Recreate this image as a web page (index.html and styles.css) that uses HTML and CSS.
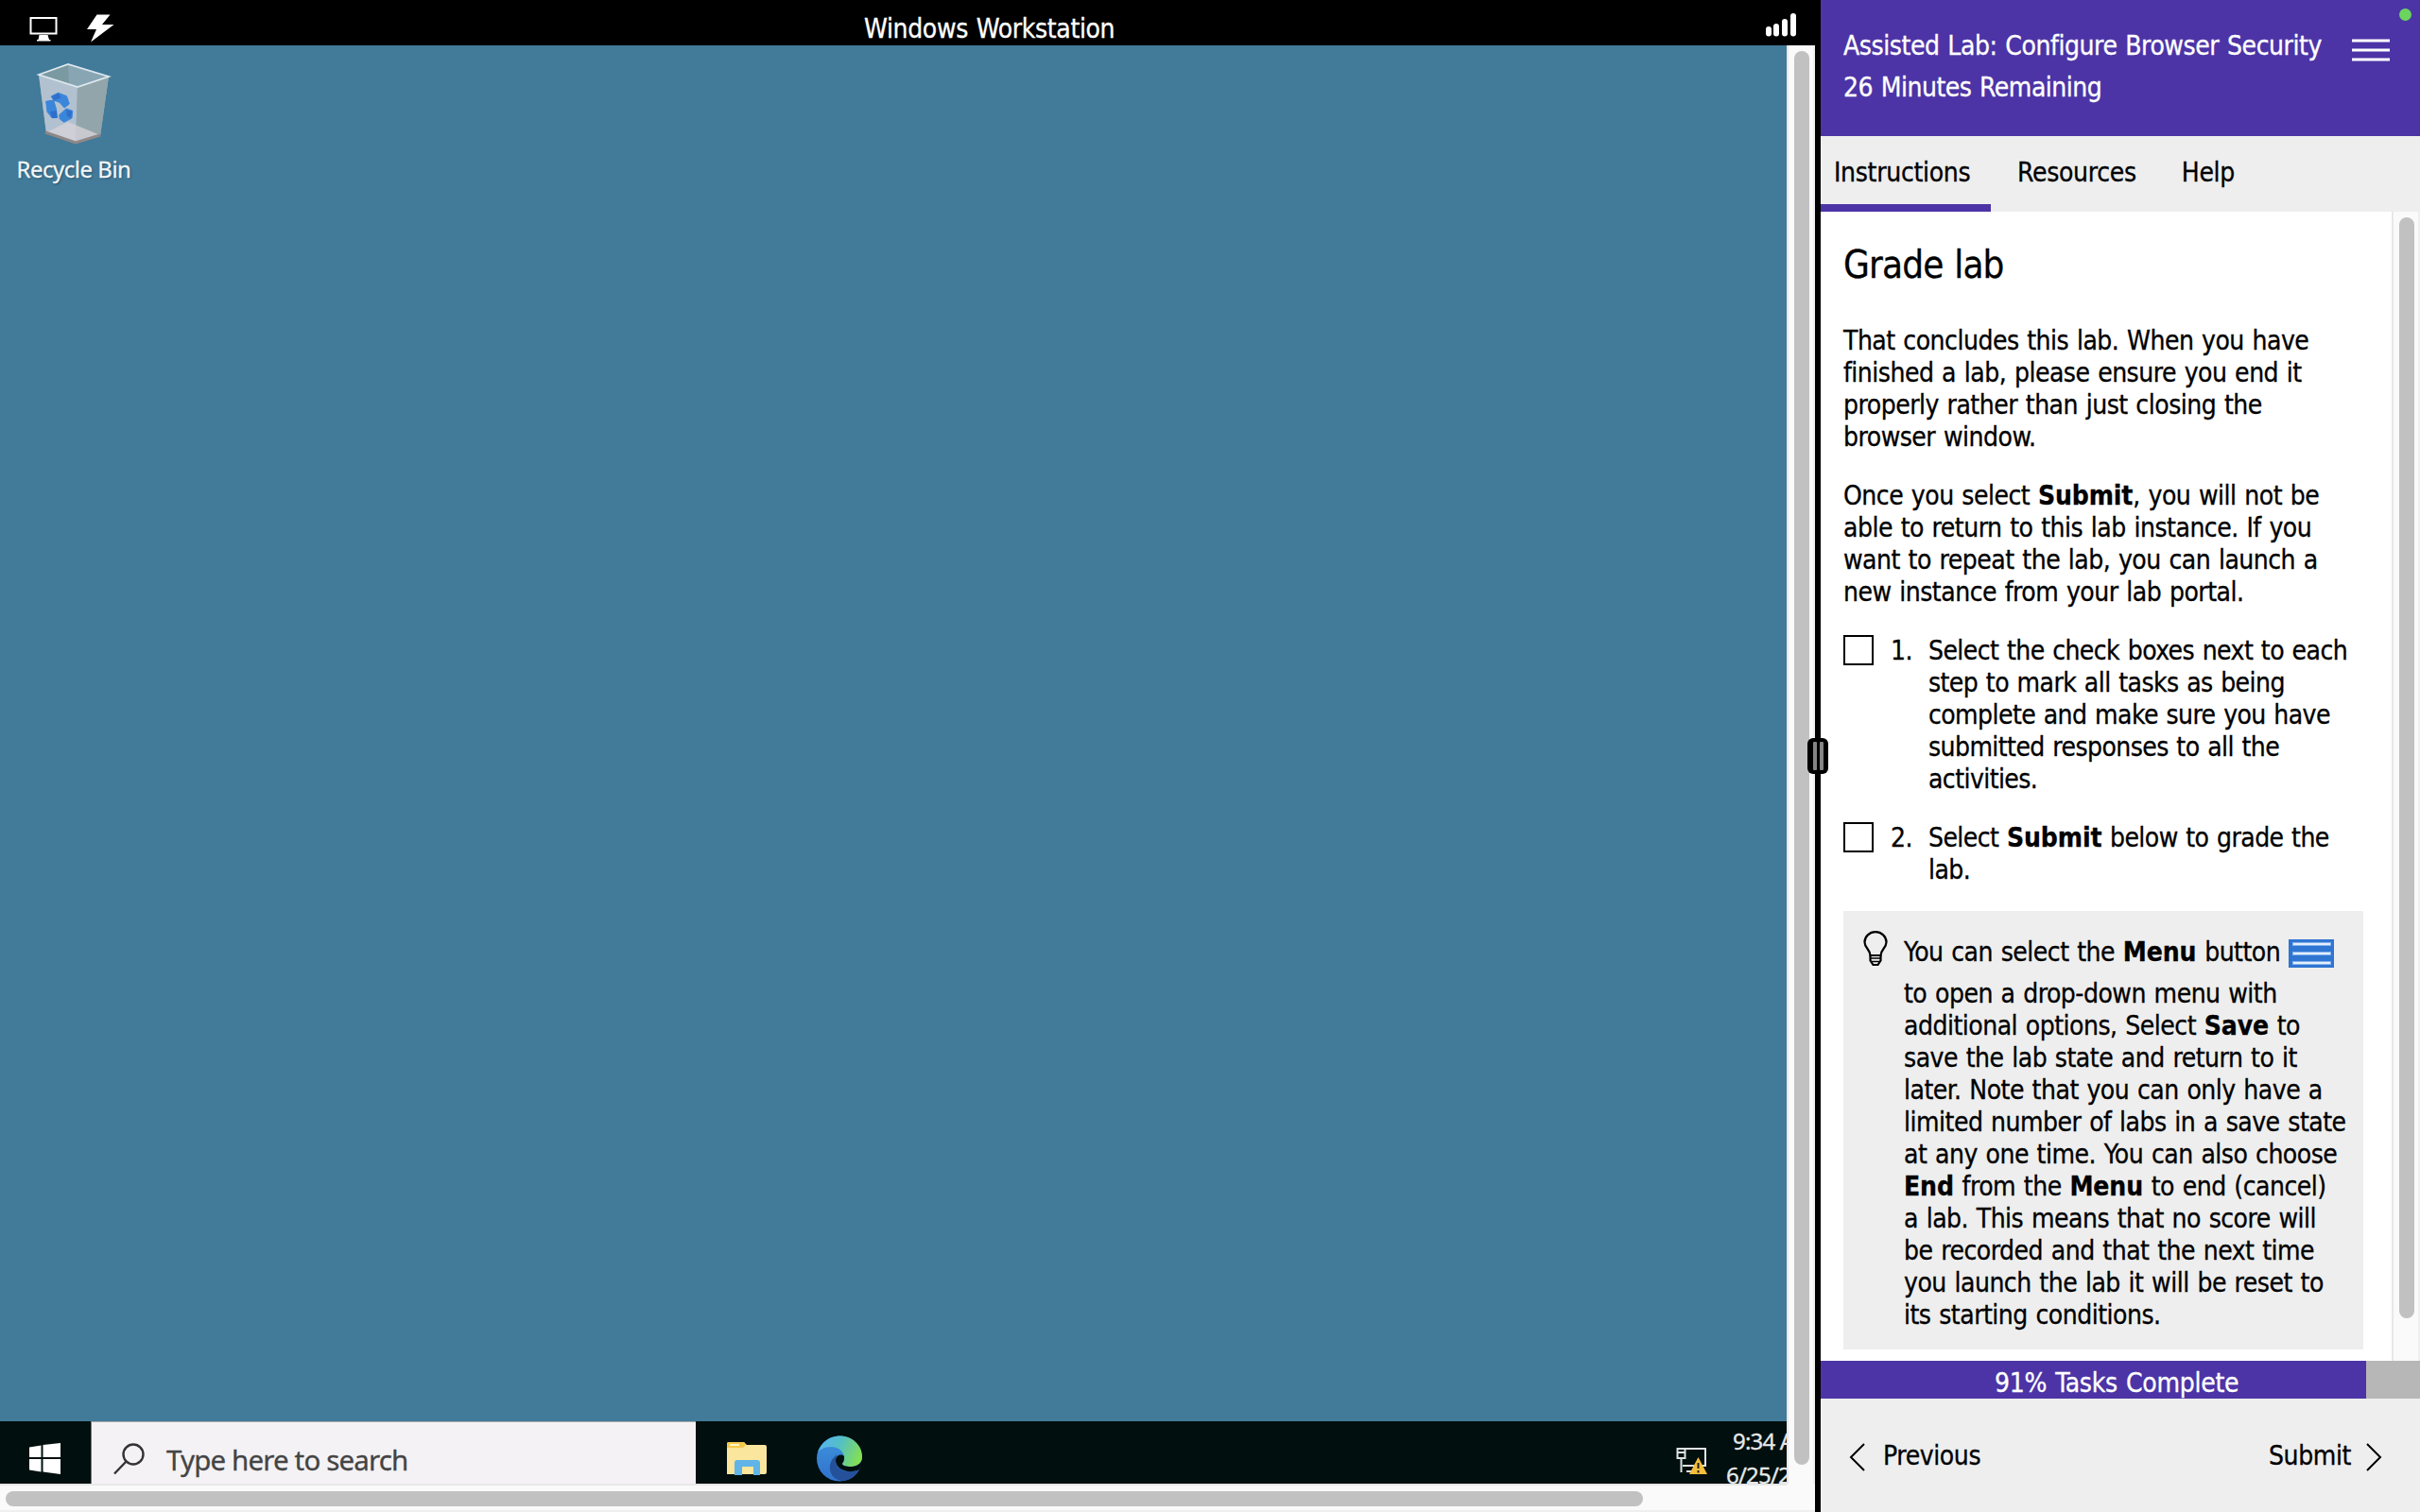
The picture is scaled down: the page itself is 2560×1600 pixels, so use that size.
FILE: index.html
```html
<!DOCTYPE html>
<html lang="en">
<head>
<meta charset="utf-8">
<title>Windows Workstation</title>
<link rel="stylesheet" href="styles.css">
</head>
<body>
<div class="app">
  <section class="machine">
    <header class="topbar">
      <div class="tools">
        <svg width="30" height="26" viewBox="0 0 30 26"><path d="M1.500 1h27v16.500h-27z" fill="none" stroke="#fff" stroke-width="2"/><path d="M10.500 19h9l1.500 5h1.500v1.500H8V24h1.500z" fill="#fff"/></svg>
        <svg width="30" height="30" viewBox="0 0 30 30"><path d="M11.500 0.500h14l-8.500 10.500h12.500L5 29.500l6-13.500H1z" fill="#fff"/></svg>
      </div>
      <h1 class="machine-name">Windows Workstation</h1>
      <svg class="signal" width="34" height="26" viewBox="0 0 34 26" fill="#fff"><rect x="1" y="14" width="6" height="10.500" rx="3"/><rect x="9" y="11" width="6" height="13.500" rx="3"/><rect x="18" y="6" width="6" height="18.500" rx="3"/><rect x="27" y="0" width="6" height="24.500" rx="3"/></svg>
    </header>
    <div class="viewport">
      <div class="desktop">
        <div class="wallpaper">
          <div class="shortcut">
            <svg width="80" height="88" viewBox="0 0 80 88">
              <path d="M3 12L34 1l43 13-9 63-26 8L11 74z" fill="#9aaab2"/>
              <path d="M3 12l41 13-2 60-31-11z" fill="#b2c1d0"/>
              <path d="M44 25l33-11-9 63-26 8z" fill="#92a5ab"/>
              <path d="M3 12L34 1l43 13-33 11z" fill="#88a5b4"/>
              <path d="M3 12L34 1l1 21z" fill="#7b99a1"/>
              <path d="M34 62l34 14-26 8-31-11z" fill="#d5d2d8" opacity=".8"/>
              <path d="M10 73l32 11 26-8" fill="none" stroke="#8f8888" stroke-width="3"/>
              <path d="M3 12L34 1l43 13-33 11z" fill="none" stroke="#dce8ee" stroke-width="1.800"/>
              <path d="M16 35l7.500-3.700 9 3.400 2.800 8.300-5.300 4-5-5.700-6.300-2.300zM10.700 40.300l8-1.300 2.600 9 1.400 9.500-5.700.2-5-6.400zM24.700 54.700L32 48l6.700 2.300L38 58l-8.300 4.300-4.400-3.300z" fill="#3a86da" stroke="#3a86da" stroke-linejoin="round"/>
              <path d="M17 35l7-3.500 2.500 5-7 3zM15 51l7-1v8h-5zM32 49l6 2-1 7-4-2z" fill="#2f6fcb"/>
            </svg>
            <span class="shortcut-name">Recycle Bin</span>
          </div>
        </div>
        <div class="taskbar">
          <div class="start"><svg width="34" height="34" viewBox="0 0 34 34" fill="#fff"><path d="M0 4.500l12.500-2V15H0zM14.500 2L33 0v15H14.500zM0 17h12.500v13.500L0 28.500zM14.500 17H33v16l-18.500-2.500z"/></svg></div>
          <div class="search">
            <svg width="34" height="34" viewBox="0 0 34 34" fill="none" stroke="#333" stroke-width="2.400"><circle cx="21" cy="12" r="10.500"/><path d="M13.500 19.500L1 32.500"/></svg>
            <span class="search-hint">Type here to search</span>
          </div>
          <div class="pinned">
            <svg width="44" height="38" viewBox="0 0 44 38"><path d="M1 3q0-2 2-2h16l3 3h19q2 0 2 2v27q0 2-2 2H1z" fill="#fae69c"/><path d="M1 3q0-2 2-2h16l2 3-3 3H1z" fill="#f5c94b"/><path d="M4 3h10v2H4z" fill="#fff5c4"/><path d="M9 36V23q0-3 3-3h21q3 0 3 3v13h-7v-9H17v9z" fill="#60b4e7"/></svg>
            <svg width="48" height="49" viewBox="0 0 48 49">
              <defs>
                <linearGradient id="wave" x1="0" y1=".3" x2="1" y2=".6"><stop offset="0" stop-color="#57b4f2"/><stop offset=".45" stop-color="#54bfc5"/><stop offset="1" stop-color="#85e04f"/></linearGradient>
                <linearGradient id="body" x1="0" y1="0" x2="0" y2="1"><stop offset="0" stop-color="#3f93dd"/><stop offset="1" stop-color="#2f72cc"/></linearGradient>
              </defs>
              <circle cx="24" cy="24.500" r="24" fill="url(#body)"/>
              <path d="M1 18C5 7 14 .5 25 .5 38 .5 48 11 48 22c0 7-5 11-12 11-5 0-9-1-9-3 0-1 2-2 2-6C29 16 22 12 15 12 8 12 3 15 1 18z" fill="url(#wave)"/>
              <path d="M22 20c-12 7-11 26 5 28 8 0 15-5 18-12-9 5-25 2-25-9 0-3 1-5 2-7z" fill="#25509a"/>
              <path d="M29 22c-1-2-8-3-9 4 0 11 15 15 25 10l3-6v-4c-3 6-8 7-12 7-5 0-9-1-9-3 0-1 2-2 2-6z" fill="#010f0e"/>
            </svg>
          </div>
          <div class="tray">
            <svg width="34" height="30" viewBox="0 0 34 30"><path d="M9 2h22v18H7" fill="none" stroke="#dfe3e3" stroke-width="2"/><path d="M1.500 2h8v10h-8zM1.500 6h8M5.500 12v15M11 26h8" fill="none" stroke="#dfe3e3" stroke-width="2"/><path d="M23.500 11L33 29H14z" fill="#f5bf3c"/><path d="M23.500 17v6M23.500 25v2.500" stroke="#222" stroke-width="2"/></svg>
            <div class="clock"><span class="time">9:34 AM</span><span class="date">6/25/2022</span></div>
          </div>
        </div>
      </div>
      <div class="vtrack"><div class="vthumb"></div></div>
      <div class="htrack"><div class="hthumb"></div></div>
      <div class="corner"></div>
    </div>
  </section>
  <div class="divider"><div class="grip"><i></i><i></i></div></div>
  <aside class="lab">
    <header class="lab-head">
      <div class="lab-title"><div class="lab-name">Assisted Lab: Configure Browser Security</div><div>26 Minutes Remaining</div></div>
      <svg class="menu" width="40" height="26" viewBox="0 0 40 26" fill="#fff"><path d="M0 1.500h40v3H0zM0 11.500h40v3H0zM0 21.500h40v3H0z"/></svg>
      <span class="status"></span>
    </header>
    <nav class="tabs"><a class="tab active">Instructions</a><a class="tab">Resources</a><a class="tab">Help</a></nav>
    <div class="scroll">
      <main class="content">
        <h2>Grade lab</h2>
        <p>That concludes this lab. When you have<br>finished a lab, please ensure you end it<br>properly rather than just closing the<br>browser window.</p>
        <p>Once you select <b>Submit</b>, you will not be<br>able to return to this lab instance. If you<br>want to repeat the lab, you can launch a<br>new instance from your lab portal.</p>
        <div class="step"><span class="box"></span><span class="num">1.</span><div>Select the check boxes next to each<br>step to mark all tasks as being<br>complete and make sure you have<br>submitted responses to all the<br>activities.</div></div>
        <div class="step"><span class="box"></span><span class="num">2.</span><div>Select <b>Submit</b> below to grade the<br>lab.</div></div>
        <div class="tip">
          <svg class="bulb" width="26" height="38" viewBox="0 0 26 38" fill="none" stroke="#000" stroke-width="2.200"><path d="M7.500 26C7.500 20 1.500 18 1.500 12a11.500 10.800 0 0 1 23 0c0 6-6 8-6 14z"/><path d="M7.500 26v5.500l3 4.500h5l3-4.500V26" /><path d="M7 29h12M8 32.500h10" stroke-width="1.500"/></svg>
          <div>You can select the <b>Menu</b> button <svg class="menu-inline" width="48" height="30" viewBox="0 0 48 30"><path fill="#2f75d2" d="M0 0h48v30H0z"/><path d="M4 5h41M4 15h41M4 25h41" stroke="#84b2ed" stroke-width="4"/><path d="M5 5h39M5 15h39M5 25h39" stroke="#e4effc" stroke-width="2"/></svg><br>to open a drop-down menu with<br>additional options, Select <b>Save</b> to<br>save the lab state and return to it<br>later. Note that you can only have a<br>limited number of labs in a save state<br>at any one time. You can also choose<br><b>End</b> from the <b>Menu</b> to end (cancel)<br>a lab. This means that no score will<br>be recorded and that the next time<br>you launch the lab it will be reset to<br>its starting conditions.</div>
        </div>
      </main>
      <div class="vtrack side"><div class="vthumb"></div></div>
    </div>
    <div class="progress"><div class="bar" style="width:91%"></div><span class="progress-text">91% Tasks Complete</span></div>
    <footer class="nav">
      <a class="nav-link"><svg width="18" height="30" viewBox="0 0 18 30" fill="none" stroke="#000" stroke-width="2"><path d="M16 1L2 15l14 14"/></svg><span>Previous</span></a>
      <a class="nav-link"><span>Submit</span><svg width="18" height="30" viewBox="0 0 18 30" fill="none" stroke="#000" stroke-width="2"><path d="M2 1l14 14L2 29"/></svg></a>
    </footer>
  </aside>
</div>
</body>
</html>
```
FILE: styles.css
```css
* { box-sizing: border-box; }
body { margin: 0; font: 28px/34px "DejaVu Sans Condensed", "DejaVu Sans", sans-serif; letter-spacing: -0.5px; word-spacing: 1.2px; color: #000; white-space: nowrap; -webkit-text-stroke: 0.3px currentColor; }
svg { display: block; flex: none; }
.app { display: grid; grid-template-columns: 1920px 6px 634px; height: 1600px; width: 2560px; overflow: hidden; background: #fff; }

.machine { display: flex; flex-direction: column; min-width: 0; }
.topbar { height: 48px; background: #000; color: #fff; display: grid; grid-template-columns: 914px 1fr auto; align-items: start; padding-right: 19px; }
.tools { display: flex; gap: 30px; padding: 15px 0 0 31px; align-items: center; }
.tools svg:first-child { margin-top: 1px; }
.machine-name { margin: 0; font-size: 28px; font-weight: 400; line-height: 34px; padding-top: 14px; letter-spacing: -0.35px; }
.signal { margin-top: 14px; }

.viewport { flex: 1; display: grid; grid-template-columns: 1890px 30px; grid-template-rows: 1522px 30px; }
.desktop { display: flex; flex-direction: column; overflow: hidden; font-family: "Noto Sans", "Open Sans", sans-serif; word-spacing: 0; }
.wallpaper { flex: 1; background: #427a99; padding: 19px 0 0 18px; }
.shortcut { width: 120px; display: flex; flex-direction: column; align-items: center; color: #f0f6f8; gap: 7px; }
.shortcut-name { font-size: 24px; line-height: 34px; letter-spacing: -0.5px; text-shadow: 1px 1px 2px rgba(0, 30, 50, .5); }
.taskbar { height: 66px; background: #010f0e; display: flex; }
.start { width: 96px; padding: 23px 0 0 31px; }
.search { width: 640px; background: #f4f2f5; border-top: 1px solid #aaa; border-left: 1px solid #777; display: flex; align-items: flex-start; gap: 22px; padding: 22px 0 0 23px; color: #444; }
.search-hint { font-size: 29.5px; line-height: 36px; letter-spacing: -0.85px; }
.pinned { display: flex; gap: 52px; padding: 15px 0 0 32px; flex: 1; }
.pinned svg:first-child { margin-top: 6px; }
.tray { width: 117px; display: flex; gap: 19px; padding-top: 3px; overflow: hidden; color: #e4e8e8; }
.tray svg { margin-top: 24px; }
.clock { display: flex; flex-direction: column; font-size: 24px; line-height: 36px; letter-spacing: -0.8px; }
.time { padding-left: 7px; }

.vtrack { background: #fafafa; border-left: 2px solid #e8e8e8; border-right: 2px solid #efefef; padding: 6px 4px 0 6px; }
.vthumb { width: 16px; height: 1496px; border-radius: 8px; background: #c1c1c1; }
.htrack { background: #fafafa; border-top: 2px solid #e8e8e8; border-bottom: 2px solid #efefef; padding: 6px 0 0 6px; }
.hthumb { width: 1732px; height: 16px; border-radius: 8px; background: #c1c1c1; }
.corner { background: #fafafa; border-bottom: 2px solid #efefef; }

.divider { background: #000; position: relative; }
.grip { position: absolute; left: -8px; top: 781px; width: 22px; height: 38px; border-radius: 6px; background: #000; display: flex; justify-content: center; gap: 3px; padding: 4px 0; z-index: 2; }
.grip i { width: 4px; background: #858585; border-radius: 1px; }

.lab { display: flex; flex-direction: column; min-width: 0; }
.lab-head { height: 144px; background: #4c34a6; color: #fff; display: flex; justify-content: space-between; padding: 27px 32px 0 24px; position: relative; line-height: 44px; }
.lab-name { letter-spacing: -0.43px; }
.menu { margin-top: 13px; }
.status { position: absolute; right: 9px; top: 9px; width: 13px; height: 13px; border-radius: 50%; background: #6bd45f; }
.tabs { height: 80px; background: #eee; display: flex; letter-spacing: -0.3px; }
.tab { padding: 22px 20px 0 28px; }
.tab.active { width: 180px; padding-left: 14px; border-bottom: 8px solid #4c34a6; }
.scroll { height: 1216px; display: grid; grid-template-columns: 604px 30px; }
.side .vthumb { height: 1165px; }
.content { padding: 32px 30px 0 24px; }
h2 { margin: 0 0 40px; font-size: 40px; line-height: 48px; font-weight: 400; letter-spacing: -0.85px; }
p { margin: 0 0 28px; }
b { letter-spacing: -0.1px; }
.step { display: grid; grid-template-columns: 50px 40px 1fr; margin-bottom: 28px; letter-spacing: -0.57px; }
.box { width: 32px; height: 32px; border: 2px solid #000; background: #fff; }
.tip { margin-top: -2px; background: #eee; height: 464px; display: grid; grid-template-columns: 43px 1fr; padding: 27px 0 0 21px; }
.bulb { margin-top: -6px; }
.menu-inline { display: inline-block; vertical-align: -18px; margin-bottom: 11px; }
.progress { height: 40px; background: #b7b7b7; position: relative; }
.bar { height: 40px; width: 91%; background: #4c34a6; }
.progress-text { position: absolute; left: 184px; top: 7px; color: #fff; letter-spacing: -0.25px; }
.nav { flex: 1; background: #eee; display: flex; justify-content: space-between; padding: 43px 40px 0 30px; letter-spacing: -0.4px; }
.nav-link { display: flex; gap: 18px; align-items: center; height: 38px; }
.nav-link span { padding-bottom: 2px; }
.nav-link:last-child { gap: 15px; }
```
